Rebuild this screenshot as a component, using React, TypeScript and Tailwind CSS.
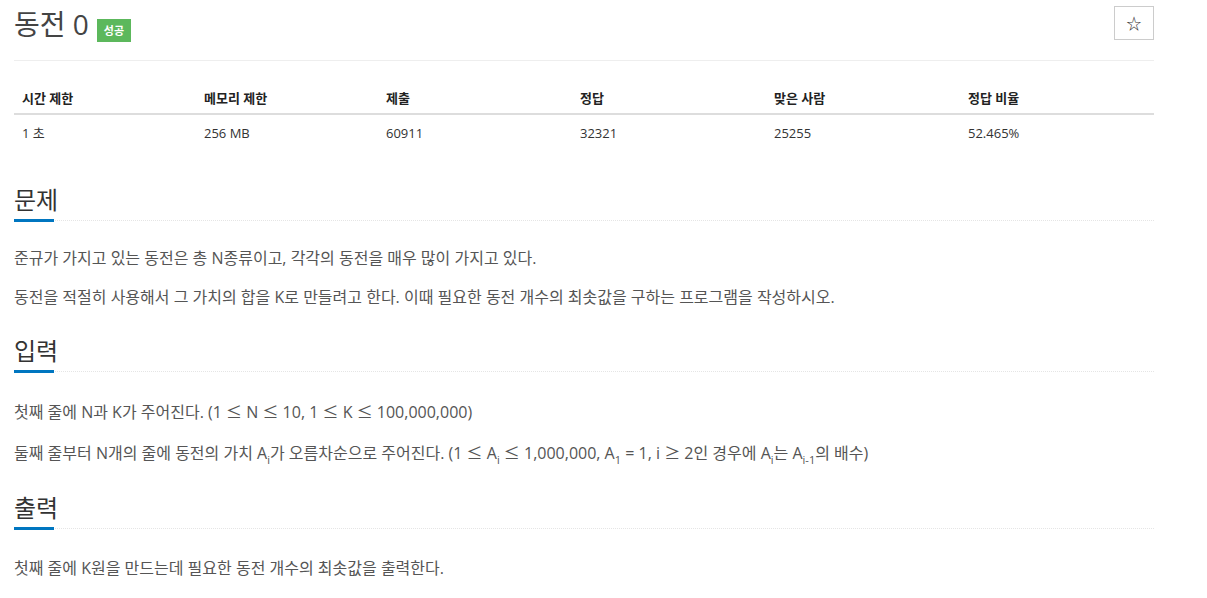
import React from "react";

const font = { fontFamily: '"Open Sans", "Noto Sans CJK KR", sans-serif' };

const stats = [
  { label: "시간 제한", value: "1 초" },
  { label: "메모리 제한", value: "256 MB" },
  { label: "제출", value: "60911" },
  { label: "정답", value: "32321" },
  { label: "맞은 사람", value: "25255" },
  { label: "정답 비율", value: "52.465%" },
];

const colWidths = ["w-[182px]", "w-[182px]", "w-[194px]", "w-[194px]", "w-[194px]", "w-[194px]"];

function SectionTitle({ children }: { children: React.ReactNode }) {
  return (
    <div className="relative border-b border-dotted border-[#e5e5e5] pb-[3px]">
      <h2 className="text-[24px] leading-[34px] text-[#333]">{children}</h2>
      {/* blue underline */}
      <div className="absolute left-0 -bottom-[2px] h-[3px] w-[40px] bg-[#0076c0]" />
    </div>
  );
}

function Sub({ children }: { children: React.ReactNode }) {
  return <sub className="text-[11px] align-[-2px] leading-none">{children}</sub>;
}

// math symbols render wider in the reference
function M({ children }: { children: React.ReactNode }) {
  return <span style={{ fontFamily: '"Noto Sans CJK KR", sans-serif' }}>{children}</span>;
}

export default function App() {
  return (
    <div className="w-[1207px] h-[598px] bg-white overflow-hidden" style={font}>
      <div className="ml-[14px] w-[1140px]">
        {/* Title */}
        <div className="flex items-start justify-between border-b border-[#eee] h-[61px]">
          <div className="flex items-center pt-[6px]">
            <h1 className="text-[28px] leading-[36px] text-[#444]">동전 0</h1>
            <span className="ml-[8px] mt-[12px] bg-[#5cb85c] text-white text-[11px] font-bold leading-none px-[7px] py-[6px]">
              성공
            </span>
          </div>
          <button className="mt-[6px] w-[40px] h-[34px] border border-[#ccc] flex items-center justify-center text-[15px] text-[#333]">
            ☆
          </button>
        </div>

        {/* Stats table */}
        <div className="mt-[24px]">
          <div className="flex border-b-2 border-[#ddd] h-[30px]">
            {stats.map((s, i) => (
              <div key={s.label} className={`${colWidths[i]} px-[8px] text-[13px] font-bold text-[#222] leading-[26px]`}>
                {s.label}
              </div>
            ))}
          </div>
          <div className="flex h-[36px]">
            {stats.map((s, i) => (
              <div key={s.label} className={`${colWidths[i]} px-[8px] text-[13px] text-[#333] leading-[36px]`}>
                {s.value}
              </div>
            ))}
          </div>
        </div>

        {/* 문제 */}
        <div className="mt-[32px]">
          <SectionTitle>문제</SectionTitle>
          <div className="pt-[26px] text-[16px] text-[#555] leading-[22px] flex flex-col gap-[17px]">
            <p>준규가 가지고 있는 동전은 총 N종류이고, 각각의 동전을 매우 많이 가지고 있다.</p>
            <p>동전을 적절히 사용해서 그 가치의 합을 K로 만들려고 한다. 이때 필요한 동전 개수의 최솟값을 구하는 프로그램을 작성하시오.</p>
          </div>
        </div>

        {/* 입력 */}
        <div className="mt-[26px]">
          <SectionTitle>입력</SectionTitle>
          <div className="pt-[28px] text-[16px] text-[#555] leading-[22px] flex flex-col gap-[18px]">
            <p>
              첫째 줄에 N과 K가 주어진다. (1 <M>≤</M> N <M>≤</M> 10, 1 <M>≤</M> K <M>≤</M> 100,000,000)
            </p>
            <p>
              둘째 줄부터 N개의 줄에 동전의 가치 A<Sub>i</Sub>가 오름차순으로 주어진다. (1 <M>≤</M> A<Sub>i</Sub> <M>≤</M> 1,000,000, A<Sub>1</Sub> = 1, i <M>≥</M> 2인 경우에 A<Sub>i</Sub>는 A<Sub>i-1</Sub>의 배수)
            </p>
          </div>
        </div>

        {/* 출력 */}
        <div className="mt-[27px]">
          <SectionTitle>출력</SectionTitle>
          <div className="pt-[28px] text-[16px] text-[#555] leading-[22px]">
            <p>첫째 줄에 K원을 만드는데 필요한 동전 개수의 최솟값을 출력한다.</p>
          </div>
        </div>
      </div>
    </div>
  );
}
